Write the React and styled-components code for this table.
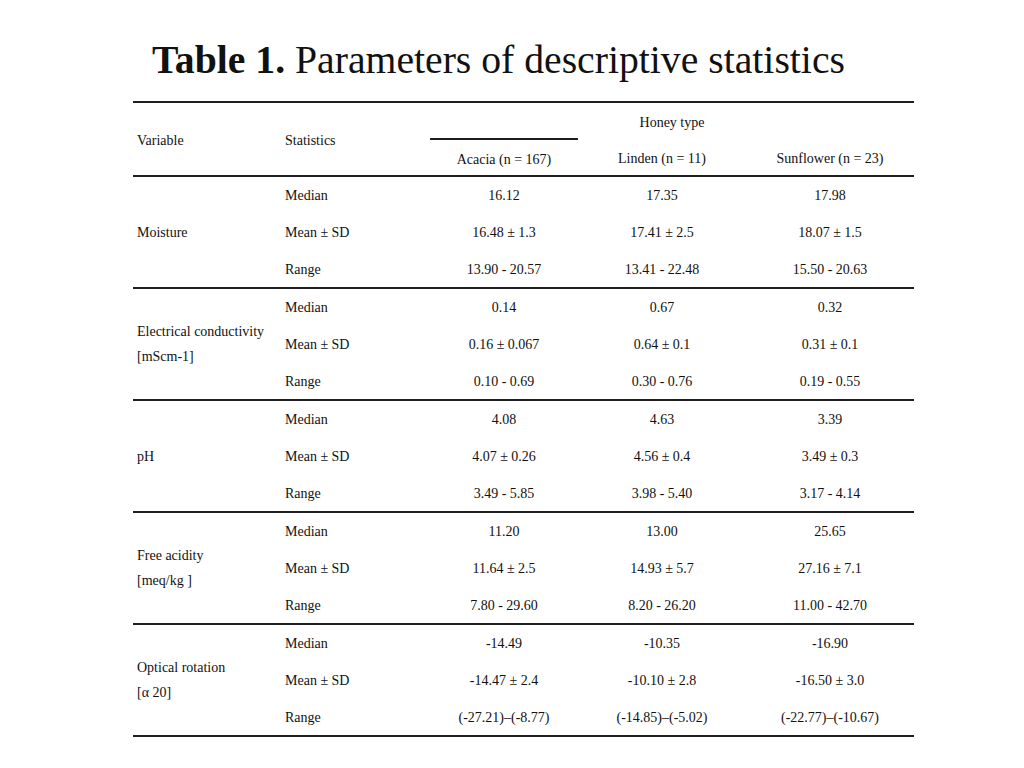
import React from 'react';
import styled, { createGlobalStyle } from 'styled-components';

const GlobalStyle = createGlobalStyle`
  html, body {
    margin: 0;
    padding: 0;
    background: #fff;
  }
  body {
    font-family: "Liberation Serif", "Times New Roman", serif;
    color: #111;
  }
`;

const Page = styled.div`
  width: 1024px;
  height: 768px;
  overflow: hidden;
  background: #fff;
`;

const Title = styled.h1`
  margin: 0;
  padding: 41px 0 0 152px;
  height: 101px;
  box-sizing: border-box;
  font-size: 39.7px;
  line-height: 1;
  font-weight: 400;
  white-space: nowrap;

  b {
    font-weight: 700;
  }
`;

const Table = styled.table`
  margin-left: 133px;
  width: 781px;
  border-collapse: collapse;
  table-layout: fixed;
  font-size: 14px;
  border-top: 2px solid #1e1e1e;
  border-bottom: 2px solid #1e1e1e;
`;

const Row = styled.tr`
  height: ${p => p.$h}px;
  border-top: ${p => (p.$rule ? '2px solid #1e1e1e' : 'none')};
`;

const Cell = styled.td`
  padding: ${p => (p.$head ? '3px 4px 0' : '0 4px')};
  text-align: ${p => (p.$left ? 'left' : 'center')};
  vertical-align: middle;
  line-height: 25px;
  white-space: nowrap;
  border-top: ${p => (p.$ruleTop ? '2px solid #1e1e1e' : 'none')};
`;

const groups = [
  {
    name: ['Moisture'],
    rows: [
      ['Median', '16.12', '17.35', '17.98'],
      ['Mean ± SD', '16.48 ± 1.3', '17.41 ± 2.5', '18.07 ± 1.5'],
      ['Range', '13.90 - 20.57', '13.41 - 22.48', '15.50 - 20.63'],
    ],
  },
  {
    name: ['Electrical conductivity', '[mScm-1]'],
    rows: [
      ['Median', '0.14', '0.67', '0.32'],
      ['Mean ± SD', '0.16 ± 0.067', '0.64 ± 0.1', '0.31 ± 0.1'],
      ['Range', '0.10 - 0.69', '0.30 - 0.76', '0.19 - 0.55'],
    ],
  },
  {
    name: ['pH'],
    rows: [
      ['Median', '4.08', '4.63', '3.39'],
      ['Mean ± SD', '4.07 ± 0.26', '4.56 ± 0.4', '3.49 ± 0.3'],
      ['Range', '3.49 - 5.85', '3.98 - 5.40', '3.17 - 4.14'],
    ],
  },
  {
    name: ['Free acidity', '[meq/kg ]'],
    rows: [
      ['Median', '11.20', '13.00', '25.65'],
      ['Mean ± SD', '11.64 ± 2.5', '14.93 ± 5.7', '27.16 ± 7.1'],
      ['Range', '7.80 - 29.60', '8.20 - 26.20', '11.00 - 42.70'],
    ],
  },
  {
    name: ['Optical rotation', '[α 20]'],
    rows: [
      ['Median', '-14.49', '-10.35', '-16.90'],
      ['Mean ± SD', '-14.47 ± 2.4', '-10.10 ± 2.8', '-16.50 ± 3.0'],
      ['Range', '(-27.21)–(-8.77)', '(-14.85)–(-5.02)', '(-22.77)–(-10.67)'],
    ],
  },
];

const rowHeights = [37, 38, 37];

export default function App() {
  return (
    <Page>
      <GlobalStyle />
      <Title>
        <b>Table 1.</b> Parameters of descriptive statistics
      </Title>
      <Table>
        <colgroup>
          <col style={{ width: 148 }} />
          <col style={{ width: 149 }} />
          <col style={{ width: 148 }} />
          <col style={{ width: 168 }} />
          <col style={{ width: 168 }} />
        </colgroup>
        <thead>
          <Row $h={37}>
            <Cell $head $left rowSpan={2}>Variable</Cell>
            <Cell $head $left rowSpan={2}>Statistics</Cell>
            <Cell $head colSpan={3}>Honey type</Cell>
          </Row>
          <Row $h={37}>
            <Cell $head $ruleTop>Acacia (n = 167)</Cell>
            <Cell $head>Linden (n = 11)</Cell>
            <Cell $head>Sunflower (n = 23)</Cell>
          </Row>
        </thead>
        {groups.map(g => (
          <tbody key={g.name[0]}>
            {g.rows.map((r, i) => (
              <Row key={r[0]} $h={rowHeights[i]} $rule={i === 0}>
                {i === 0 && (
                  <Cell $left rowSpan={3}>
                    {g.name.map(line => (
                      <div key={line}>{line}</div>
                    ))}
                  </Cell>
                )}
                <Cell $left>{r[0]}</Cell>
                <Cell>{r[1]}</Cell>
                <Cell>{r[2]}</Cell>
                <Cell>{r[3]}</Cell>
              </Row>
            ))}
          </tbody>
        ))}
      </Table>
    </Page>
  );
}
